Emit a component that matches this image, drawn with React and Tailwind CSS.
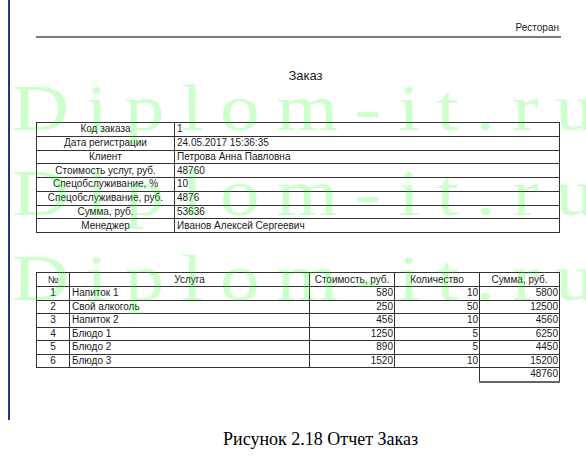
import React from 'react'

const info = [
  ['Код заказа', '1'],
  ['Дата регистрации', '24.05.2017 15:36:35'],
  ['Клиент', 'Петрова Анна Павловна'],
  ['Стоимость услуг, руб.', '48760'],
  ['Спецобслуживание, %', '10'],
  ['Спецобслуживание, руб.', '4876'],
  ['Сумма, руб.', '53636'],
  ['Менеджер', 'Иванов Алексей Сергеевич'],
]

const items = [
  [1, 'Напиток 1', 580, 10, 5800],
  [2, 'Свой алкоголь', 250, 50, 12500],
  [3, 'Напиток 2', 456, 10, 4560],
  [4, 'Блюдо 1', 1250, 5, 6250],
  [5, 'Блюдо 2', 890, 5, 4450],
  [6, 'Блюдо 3', 1520, 10, 15200],
]

const App = () => {
  return (
    <div className="relative w-[586px] h-[460px] overflow-hidden bg-white font-['Liberation_Sans',Arial,sans-serif] text-[#1a1a1a]">
      <div className="flex">
        {/* left margin bar */}
        <div className="ml-[8px] w-[2px] h-[420px] bg-[#2f4f9c] border-x border-[#223a78]"></div>

        <div className="ml-[26px] w-[525px]">
          {/* header */}
          <div className="pt-[22px] text-right text-[10px] leading-[12px] pr-[2px]">Ресторан</div>
          <div className="mt-[2px] h-[2px] bg-[#7a7a7a]"></div>

          <div className="mt-[30px] text-center text-[13px] leading-[16px] pl-[14px]">Заказ</div>

          {/* order info */}
          <table className="mt-[38px] w-[524px] border-collapse border border-[#444] text-[10px] leading-[12px]">
            <tbody>
              {info.map(([label, value]) => (
                <tr key={label} className="h-[13.75px]">
                  <td className="w-[138px] border border-[#333] text-center p-0">{label}</td>
                  <td className="border border-[#333] pl-[2px] py-0">{value}</td>
                </tr>
              ))}
            </tbody>
          </table>

          {/* services */}
          <table className="mt-[39px] w-[524px] border-collapse text-[10px] leading-[12px]">
            <thead>
              <tr className="h-[14px]">
                <th className="w-[33px] border border-[#333] font-normal p-0">№</th>
                <th className="w-[240px] border border-[#333] font-normal p-0">Услуга</th>
                <th className="w-[85px] border border-[#333] font-normal p-0">Стоимость, руб.</th>
                <th className="w-[85px] border border-[#333] font-normal p-0">Количество</th>
                <th className="border border-[#333] font-normal p-0">Сумма, руб.</th>
              </tr>
            </thead>
            <tbody>
              {items.map(([n, name, price, qty, sum]) => (
                <tr key={n} className="h-[13.5px]">
                  <td className="border border-[#333] text-center p-0">{n}</td>
                  <td className="border border-[#333] pl-[2px] py-0">{name}</td>
                  <td className="border border-[#333] text-right pr-[1px] py-0">{price}</td>
                  <td className="border border-[#333] text-right pr-[1px] py-0">{qty}</td>
                  <td className="border border-[#333] text-right pr-[1px] py-0">{sum}</td>
                </tr>
              ))}
              <tr className="h-[14px]">
                <td colSpan={4} className="p-0"></td>
                <td className="border border-[#333] border-b-2 border-b-[#666] text-right pr-[1px] py-0">48760</td>
              </tr>
            </tbody>
          </table>
        </div>
      </div>

      <div className="mt-[9px] pl-[223px] font-['Liberation_Serif','Times_New_Roman',serif] text-[18px] leading-[20px] text-black">
        Рисунок 2.18 Отчет Заказ
      </div>

      {/* watermark */}
      <div className="pointer-events-none absolute left-[12px] top-[65px] origin-left scale-x-[1.2] flex flex-col whitespace-nowrap font-['Liberation_Serif','Times_New_Roman',serif] text-[66px] leading-[85px] tracking-[14px] text-[#00ff0033]">
        <span>Diplom-it.ru</span>
        <span>Diplom-it.ru</span>
        <span>Diplom-it.ru</span>
      </div>
    </div>
  )
}

export default App
